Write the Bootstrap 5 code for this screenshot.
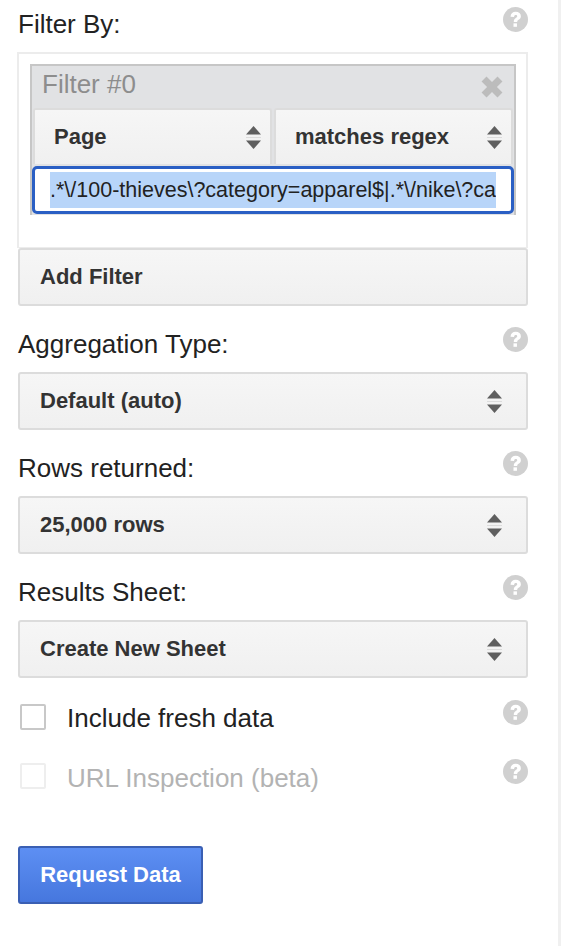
<!DOCTYPE html>
<html lang="en">
<head>
<meta charset="utf-8">
<title>Filter panel</title>
<link href="https://cdn.jsdelivr.net/npm/bootstrap@5.3.0/dist/css/bootstrap.min.css" rel="stylesheet">
<style>
html, body { height: 100%; }
body { font-family: "Liberation Sans", Arial, sans-serif; color: #222; background: #fff; overflow: hidden; }
.pane { width: 561px; height: 946px; border-right: 3px solid #f0f0f0; padding: 9px 30px 0 18px; }
.lbl { font-size: 26px; line-height: 30px; color: #222; margin: 0; }
.lbl-row { height: 30px; }
.first-row { margin-bottom: 13px; }
.gap-row { margin-top: 23px; margin-bottom: 13px; }
.help { width: 25px; height: 25px; flex: none; margin-right: 0; margin-top: -2px; }
.help-a { margin-top: -3px; }
.help-b { margin-top: -4px; }
.filter-box { border: 2px solid #ececec; border-bottom-width: 1px; height: 196px; padding: 10px 10px 0 11px; margin-left: -1px; width: 511px; }
.filter-inner { border: 2px solid #c6c6c6; border-bottom: 0; background: #e1e2e4; height: 151px; }
.filter-head { height: 42px; padding: 0 11px 6px 10px; color: #8d8d8d; font-size: 26px; line-height: 30px; }
.gbtn { background: linear-gradient(#f6f6f6, #f0f0f0); border: 2px solid #dcdcdc; border-radius: 3px; color: #333; font-weight: 700; font-size: 22px; line-height: 26px; height: 58px; padding: 0 24px 0 20px; width: 100%; }
.gbtn:hover, .gbtn:active { background: #f1f1f1 !important; border-color: #dcdcdc !important; color: #333 !important; }
.sel-cell { height: 56px; width: 50%; padding: 0 9px 0 19px; border-bottom: 0; border-radius: 3px 3px 0 0; }
.sel-row { gap: 2px; padding: 0 1px; }
.arrows { width: 15px; height: 23px; flex: none; }
.regex-box { border: 3px solid #2a5fc4; border-radius: 5px; height: 48px; margin: 2px 0 0; padding: 3px 15px; background: #fff; overflow: hidden; white-space: nowrap; font-size: 21.5px; line-height: 36px; color: #222; }
.regex-sel { background: #b8d5f9; display: block; overflow: hidden; height: 36px; }
.chk { width: 26px; height: 26px; border: 2px solid #c8c8c8; border-radius: 2px; margin: -2px 0 0 2px; flex: none; background: #fff; appearance: none; }
.chk-off { border-color: #eeeeee; margin-top: -4px; }
.chk-lbl { font-size: 26px; line-height: 30px; color: #222; margin-left: 21px; }
.chk-lbl-off { color: #b3b3b3; }
.chk-row { height: 30px; }
.row-one { margin-top: 25px; }
.row-two { margin-top: 30px; }
.req { background: linear-gradient(#5d8ff3, #4677de); border: 2px solid #3a5fb3; border-radius: 3px; color: #fff; font-weight: 700; font-size: 22px; line-height: 26px; height: 58px; width: 185px; padding: 0; margin-top: 53px; }
.req:hover, .req:active { background: #4677de !important; border-color: #3a5fb3 !important; color: #fff !important; }
.x-mark { width: 22px; height: 22px; flex: none; margin-top: 6px; }
</style>
</head>
<body>
<svg width="0" height="0" class="d-none" aria-hidden="true">
  <symbol id="i-help" viewBox="0 0 26 26">
    <circle cx="13" cy="13" r="13" fill="#d0d0d0"/>
    <path d="M7.8 10.2C8 6.8 10.2 5 13.2 5c3.2 0 5.4 1.8 5.4 4.5 0 2-1.1 3-2.4 3.8-1.1.7-1.4 1.1-1.4 2.2h-3.6c0-2.1.7-3.1 2.1-4 .9-.6 1.5-1 1.5-1.8 0-.8-.6-1.3-1.5-1.3-1 0-1.7.6-1.8 1.9z" fill="#fff"/>
    <rect x="10.9" y="17" width="3.6" height="3.6" fill="#fff"/>
  </symbol>
  <symbol id="i-arrows" viewBox="0 0 15 23">
    <path d="M7.5 0 15 8.5H0z" fill="#5f5f5f"/>
    <rect x="0" y="11" width="15" height="1" fill="#dcdcdc"/>
    <path d="M0 14.5H15L7.5 23z" fill="#5f5f5f"/>
  </symbol>
</svg>

<div class="pane">
  <div class="lbl-row d-flex justify-content-between align-items-start first-row">
    <p class="lbl">Filter By:</p>
    <svg class="help"><use href="#i-help"/></svg>
  </div>

  <div class="filter-box">
    <div class="filter-inner">
      <div class="filter-head d-flex justify-content-between align-items-center">
        <span>Filter #0</span>
        <svg class="x-mark" viewBox="2 2 20 20"><path d="M2.5 7 7 2.5l5 5 5-5L21.500 7l-5 5 5 5-4.500 4.500-5-5-5 5L2.500 17l5-5z" fill="#bcbcbc"/></svg>
      </div>
      <div class="d-flex sel-row">
        <div class="gbtn sel-cell d-flex justify-content-between align-items-center"><span>Page</span><svg class="arrows"><use href="#i-arrows"/></svg></div>
        <div class="gbtn sel-cell d-flex justify-content-between align-items-center"><span>matches regex</span><svg class="arrows"><use href="#i-arrows"/></svg></div>
      </div>
      <div class="regex-box"><span class="regex-sel">.*\/100-thieves\?category=apparel$|.*\/nike\?ca</span></div>
    </div>
  </div>

  <button type="button" class="btn gbtn text-start d-block">Add Filter</button>

  <div class="lbl-row d-flex justify-content-between align-items-start gap-row">
    <p class="lbl">Aggregation Type:</p>
    <svg class="help"><use href="#i-help"/></svg>
  </div>
  <button type="button" class="btn gbtn d-flex justify-content-between align-items-center"><span>Default (auto)</span><svg class="arrows"><use href="#i-arrows"/></svg></button>

  <div class="lbl-row d-flex justify-content-between align-items-start gap-row">
    <p class="lbl">Rows returned:</p>
    <svg class="help"><use href="#i-help"/></svg>
  </div>
  <button type="button" class="btn gbtn d-flex justify-content-between align-items-center"><span>25,000 rows</span><svg class="arrows"><use href="#i-arrows"/></svg></button>

  <div class="lbl-row d-flex justify-content-between align-items-start gap-row">
    <p class="lbl">Results Sheet:</p>
    <svg class="help"><use href="#i-help"/></svg>
  </div>
  <button type="button" class="btn gbtn d-flex justify-content-between align-items-center"><span>Create New Sheet</span><svg class="arrows"><use href="#i-arrows"/></svg></button>

  <div class="chk-row row-one d-flex align-items-center justify-content-between">
    <div class="d-flex align-items-center"><input type="checkbox" class="chk" aria-label="Include fresh data"><span class="chk-lbl">Include fresh data</span></div>
    <svg class="help help-a align-self-start"><use href="#i-help"/></svg>
  </div>
  <div class="chk-row row-two d-flex align-items-center justify-content-between">
    <div class="d-flex align-items-center"><input type="checkbox" class="chk chk-off" disabled aria-label="URL Inspection (beta)"><span class="chk-lbl chk-lbl-off">URL Inspection (beta)</span></div>
    <svg class="help help-b align-self-start"><use href="#i-help"/></svg>
  </div>

  <button type="button" class="btn req d-block">Request Data</button>
</div>
<script src="https://cdn.jsdelivr.net/npm/bootstrap@5.3.0/dist/js/bootstrap.bundle.min.js"></script>
</body>
</html>
